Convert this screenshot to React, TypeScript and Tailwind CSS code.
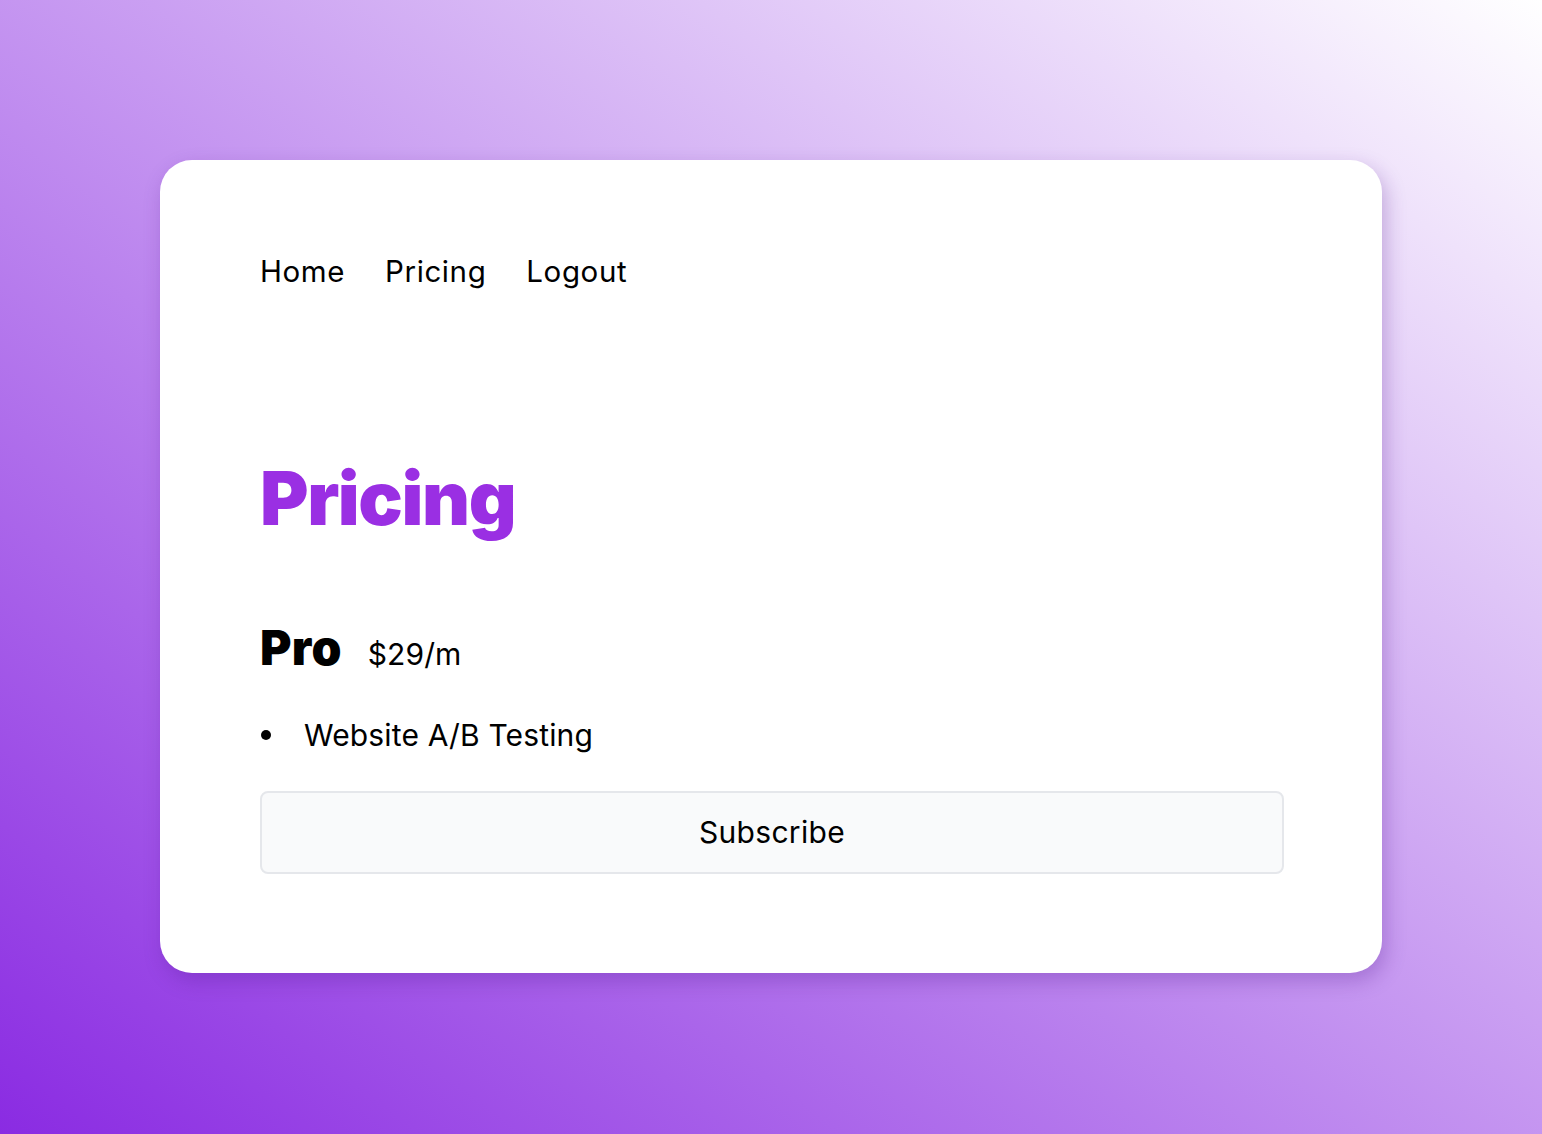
export default function App() {
  return (
    <div
      className="w-full min-h-[1134px] flex items-start justify-center pt-[160px] bg-[linear-gradient(to_top_right,#8a2be2,#ffffff)]"
      style={{ fontFamily: 'Inter, "Noto Sans", sans-serif' }}
    >
      <div className="w-[1222px] h-[813px] bg-white rounded-[32px] shadow-[4px_8px_20px_rgba(80,20,140,0.28)] pl-[100px] pr-[98px] pt-[94px]">
        <nav className="flex gap-[40px] text-[29.5px] leading-[34px] tracking-[0.6px] text-black">
          <a>Home</a>
          <a>Pricing</a>
          <a>Logout</a>
        </nav>
        <h1 className="mt-[164px] text-[74px] leading-[92px] font-black tracking-[-1.4px] text-[#9a2fe3]">Pricing</h1>
        <div className="mt-[76px] flex items-baseline gap-[26px]">
          <h2 className="text-[48px] leading-[56px] font-black tracking-[0.3px] text-black">Pro</h2>
          <span className="text-[30px] tracking-[0.1px] text-black">$29/m</span>
        </div>
        <ul className="mt-[38px] text-[30px] leading-[40px] tracking-[0.15px] text-black">
          <li className="flex items-center">
            <span className="w-[10px] h-[10px] rounded-full bg-black ml-[1px] mr-[33px]"></span>
            <span>Website A/B Testing</span>
          </li>
        </ul>
        <button className="mt-[36px] w-full h-[83px] rounded-[8px] border-2 border-[#e5e7eb] bg-[#f9fafb] text-[30px] tracking-[0.3px] text-black">
          Subscribe
        </button>
      </div>
    </div>
  );
}
